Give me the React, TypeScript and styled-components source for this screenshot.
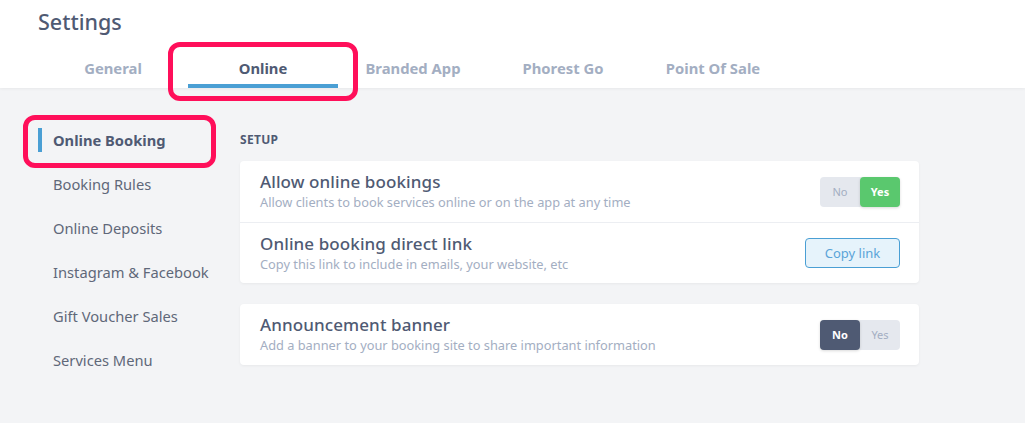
import React from "react";
import styled, { createGlobalStyle } from "styled-components";

const Global = createGlobalStyle`
  html, body { margin: 0; padding: 0; }
  body {
    background: #f3f4f6;
    font-family: "Noto Sans", "Open Sans", sans-serif;
    color: #4f5a73;
  }
  * { box-sizing: border-box; }
`;

const Page = styled.div`
  width: 1025px;
  height: 423px;
  background: #f3f4f6;
  overflow: hidden;
`;

const Header = styled.header`
  background: #fff;
  padding: 8px 0 0 38px;
  height: 88px;
  box-shadow: 0 1px 3px rgba(0, 0, 0, 0.05);
  position: relative;
`;

const Title = styled.h1`
  margin: 0;
  font-size: 21.5px;
  font-weight: 500;
  color: #4f5a73;
  line-height: 28px;
`;

const Tabs = styled.nav`
  display: flex;
  margin-top: 18px;
`;

const Tab = styled.div<{ $active?: boolean }>`
  width: 150px;
  height: 34px;
  display: flex;
  align-items: flex-start;
  justify-content: center;
  padding-top: 4px;
  font-size: 14.8px;
  font-weight: 700;
  color: ${(p) => (p.$active ? "#4f5a73" : "#a3aec2")};
  border-bottom: 4px solid ${(p) => (p.$active ? "#4a9fd4" : "transparent")};
  position: relative;
`;

const Highlight = styled.div<{ $top: number; $left: number; $w: number; $h: number }>`
  position: absolute;
  top: ${(p) => p.$top}px;
  left: ${(p) => p.$left}px;
  width: ${(p) => p.$w}px;
  height: ${(p) => p.$h}px;
  border: 5px solid #ff0f5a;
  border-radius: 12px;
  pointer-events: none;
  z-index: 2;
`;

const Body = styled.div`
  display: flex;
  padding: 30px 0 0 38px;
  position: relative;
`;

const Sidebar = styled.aside`
  width: 202px;
  display: flex;
  flex-direction: column;
`;

const NavItem = styled.div<{ $active?: boolean }>`
  height: 44px;
  display: flex;
  align-items: center;
  padding-left: 15px;
  font-size: 14.7px;
  font-weight: ${(p) => (p.$active ? 700 : 400)};
  color: ${(p) => (p.$active ? "#4f5a73" : "#5f6879")};
  position: relative;
  white-space: nowrap;
  &::before {
    content: "";
    display: ${(p) => (p.$active ? "block" : "none")};
    position: absolute;
    left: 0;
    top: 10px;
    width: 4px;
    height: 24px;
    background: #4a9fd4;
  }
`;

const Content = styled.main`
  width: 679px;
  display: flex;
  flex-direction: column;
`;

const SectionLabel = styled.div`
  font-size: 12px;
  font-weight: 700;
  color: #4f5a73;
  line-height: 16px;
  margin-top: 14px;
  margin-bottom: 13px;
  letter-spacing: 0.3px;
`;

const Card = styled.section`
  background: #fff;
  border-radius: 4px;
  box-shadow: 0 1px 3px rgba(0, 0, 0, 0.05);
  margin-bottom: 21px;
`;

const Row = styled.div`
  height: 61px;
  display: flex;
  align-items: center;
  justify-content: space-between;
  padding: 0 19px 0 20px;
  & + & {
    border-top: 1px solid #eceef2;
  }
`;

const RowText = styled.div`
  display: flex;
  flex-direction: column;
  gap: 2px;
`;

const RowTitle = styled.div`
  font-size: 17px;
  font-weight: 500;
  color: #4f5a73;
  line-height: 20px;
  letter-spacing: 0.1px;
`;

const RowDesc = styled.div`
  font-size: 12.8px;
  color: #a3aec2;
  line-height: 17px;
`;

const Toggle = styled.div`
  display: flex;
  width: 80px;
  height: 30px;
  background: #e5e8ee;
  border-radius: 4px;
`;

const ToggleOpt = styled.div<{ $on?: boolean; $color?: string }>`
  flex: 1;
  display: flex;
  align-items: center;
  justify-content: center;
  font-size: 11px;
  font-weight: ${(p) => (p.$on ? 700 : 400)};
  color: ${(p) => (p.$on ? "#fff" : "#a3aec2")};
  background: ${(p) => (p.$on ? p.$color : "transparent")};
  border-radius: 4px;
  box-shadow: ${(p) => (p.$on ? "0 1px 3px rgba(0,0,0,0.15)" : "none")};
`;

const CopyButton = styled.button`
  width: 95px;
  height: 30px;
  border: 1px solid #4a9fd4;
  background: #e6f3fb;
  color: #5aa4d8;
  border-radius: 4px;
  font-family: inherit;
  font-size: 13px;
  padding: 0;
`;

export default function App() {
  const tabs = ["General", "Online", "Branded App", "Phorest Go", "Point Of Sale"];
  const nav = [
    "Online Booking",
    "Booking Rules",
    "Online Deposits",
    "Instagram & Facebook",
    "Gift Voucher Sales",
    "Services Menu",
  ];
  return (
    <Page>
      <Global />
      <Header>
        <Title>Settings</Title>
        <Tabs>
          {tabs.map((t) => (
            <Tab key={t} $active={t === "Online"}>
              {t}
            </Tab>
          ))}
        </Tabs>
        <Highlight $top={42} $left={168} $w={190} $h={59} />
      </Header>
      <Body>
        <Highlight $top={27} $left={23} $w={193} $h={53} />
        <Sidebar>
          {nav.map((n, i) => (
            <NavItem key={n} $active={i === 0}>
              {n}
            </NavItem>
          ))}
        </Sidebar>
        <Content>
          <SectionLabel>SETUP</SectionLabel>
          <Card>
            <Row>
              <RowText>
                <RowTitle>Allow online bookings</RowTitle>
                <RowDesc>Allow clients to book services online or on the app at any time</RowDesc>
              </RowText>
              <Toggle>
                <ToggleOpt>No</ToggleOpt>
                <ToggleOpt $on $color="#5ac86e">Yes</ToggleOpt>
              </Toggle>
            </Row>
            <Row>
              <RowText>
                <RowTitle>Online booking direct link</RowTitle>
                <RowDesc>Copy this link to include in emails, your website, etc</RowDesc>
              </RowText>
              <CopyButton>Copy link</CopyButton>
            </Row>
          </Card>
          <Card>
            <Row>
              <RowText>
                <RowTitle>Announcement banner</RowTitle>
                <RowDesc>Add a banner to your booking site to share important information</RowDesc>
              </RowText>
              <Toggle>
                <ToggleOpt $on $color="#4f5a73">No</ToggleOpt>
                <ToggleOpt>Yes</ToggleOpt>
              </Toggle>
            </Row>
          </Card>
        </Content>
      </Body>
    </Page>
  );
}
